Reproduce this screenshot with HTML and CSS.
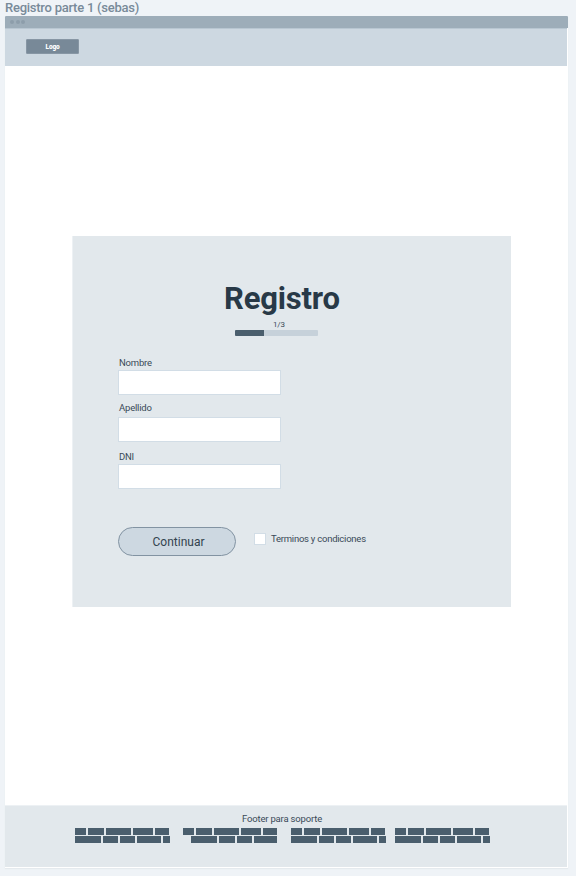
FILE: index.html
```html
<!DOCTYPE html>
<html lang="es">
<head>
<meta charset="utf-8">
<title>Registro</title>
<link rel="stylesheet" href="styles.css">
</head>
<body>
<div class="frame-title"><span>Registro parte 1 (sebas)</span></div>
<div class="window">
  <div class="titlebar"><i></i><i></i><i></i></div>
  <header class="header"><div class="logo"><span>Logo</span></div></header>
  <main class="main">
    <form class="card">
      <h1><span>Registro</span></h1>
      <div class="step"><span>1/3</span></div>
      <div class="progress"><div class="progress-fill"></div></div>
      <label class="field nombre"><span>Nombre</span><input type="text"></label>
      <label class="field apellido"><span>Apellido</span><input type="text"></label>
      <label class="field dni"><span>DNI</span><input type="text"></label>
      <div class="actions">
        <button type="button"><span>Continuar</span></button>
        <label class="terms"><i class="checkbox"></i><span>Terminos y condiciones</span></label>
      </div>
    </form>
  </main>
  <footer class="footer">
    <div class="footer-title"><span>Footer para soporte</span></div>
    <div class="columns">
      <div class="column">
        <div class="line top"><i></i><i></i><i></i><i></i><i></i></div>
        <div class="line bottom"><i></i><i></i><i></i><i></i><i></i></div>
      </div>
      <div class="column">
        <div class="line top"><i></i><i></i><i></i><i></i><i></i></div>
        <div class="line bottom indented"><i></i><i></i><i></i><i></i></div>
      </div>
      <div class="column">
        <div class="line top"><i></i><i></i><i></i><i></i><i></i></div>
        <div class="line bottom"><i></i><i></i><i></i><i></i><i></i></div>
      </div>
      <div class="column">
        <div class="line top"><i></i><i></i><i></i><i></i><i></i></div>
        <div class="line bottom"><i></i><i></i><i></i><i></i><i></i></div>
      </div>
    </div>
  </footer>
</div>
</body>
</html>
```
FILE: styles.css
```css
* { box-sizing: border-box; }
body {
  margin: 0;
  height: 876px;
  overflow: hidden;
  background: #eff3f7;
  color: #3a4a58;
  font-family: Roboto, "Liberation Sans", sans-serif;
}
.frame-title {
  height: 16px;
  padding-left: 5px;
  font-size: 13px;
  font-weight: 500;
  line-height: 15px;
  letter-spacing: -0.25px;
  color: #788a99;
  white-space: nowrap;
}
.window {
  display: flex;
  flex-direction: column;
  width: 563px;
  height: 852px;
  margin-left: 5px;
  background: #fff;
  box-shadow: 0 1px 1px #e5eaee;
}
.titlebar {
  display: flex;
  gap: 1.5px;
  height: 12px;
  padding: 4px 0 0 5px;
  border-radius: 1px 1px 0 0;
  background: #9dadb9;
}
.titlebar i {
  width: 4px;
  height: 4px;
  border-radius: 50%;
  background: #8d9dab;
}
.header {
  width: 562px;
  height: 38px;
  padding: 10px 0 0 21px;
  border-top: 1px solid #b9c7d2;
  background: #cdd8e1;
}
.logo {
  width: 53px;
  height: 15px;
  border: 1px solid #8796a4;
  border-radius: 1px;
  background: #788998;
  color: #fff;
  font-size: 6.5px;
  font-weight: 900;
  line-height: 14px;
  letter-spacing: -0.2px;
  text-align: center;
}
.main {
  height: 739px;
  padding: 170px 0 0 67px;
}
.card {
  width: 439px;
  height: 371px;
  padding: 44px 0 0 46px;
  border-left: 1px solid #edf1f4;
  padding-left: 45px;
  background: #e2e8ec;
}
h1 {
  margin: 0 0 0 106px;
  height: 40px;
  font-size: 31px;
  line-height: 37px;
  font-weight: 700;
  letter-spacing: -0.2px;
  color: #283947;
}
.step {
  height: 10px;
  margin-left: 155px;
  font-size: 8px;
  line-height: 10px;
  letter-spacing: -0.2px;
}
.progress {
  width: 83px;
  height: 6px;
  margin: 0 0 0 117px;
  border-radius: 1px;
  background: #c6d1da;
  overflow: hidden;
}
.progress-fill { width: 29px; height: 6px; background: #4a5e6d; }
.field {
  display: block;
  width: 163px;
  font-size: 9.5px;
  letter-spacing: -0.2px;
}
.field span {
  display: block;
  width: max-content;
  height: 14px;
  margin-left: 1px;
  line-height: 14px;
}
.field input {
  display: block;
  width: 163px;
  height: 25px;
  margin: 0;
  padding: 0 5px;
  border: 1px solid #d2dde6;
  border-radius: 0;
  outline: 0;
  background: #fff;
}
.nombre { padding-top: 20px; }
.apellido { padding-top: 6px; }
.apellido input { margin-top: 2px; }
.dni { padding-top: 8px; }
.actions { display: flex; margin-top: 38px; }
button {
  width: 118px;
  height: 29px;
  padding: 0 0 0 3px;
  border: 1px solid #8293a2;
  border-radius: 15px;
  background: #cdd8e1;
  color: #33434f;
  font-family: inherit;
  font-size: 12px;
}
.terms {
  display: flex;
  gap: 5px;
  height: 12px;
  margin: 6px 0 0 18px;
  font-size: 9.5px;
  line-height: 11px;
  letter-spacing: -0.24px;
  white-space: nowrap;
}
.checkbox {
  width: 12px;
  height: 12px;
  border: 1px solid #d2dde6;
  background: #fff;
}
.footer {
  width: 562px;
  height: 62px;
  padding-top: 5px;
  border-top: 1px solid #edf1f4;
  background: #e2e8ec;
}
.footer-title {
  height: 17px;
  margin-left: 237px;
  font-size: 9.5px;
  line-height: 15px;
  letter-spacing: -0.18px;
}
.columns {
  display: grid;
  grid-template-columns: 108px 108px 104px 96px;
  margin-left: 69.5px;
}
.column { display: grid; gap: 1px; }
.line { display: grid; column-gap: 2px; height: 7px; }
.line i { background: #4a5e6d; }
.top { grid-template-columns: 11.5px 16px 25px 20px 14px; }
.bottom { grid-template-columns: 26.5px 15px 15px 24px 7px; }
.indented { padding-left: 8px; grid-template-columns: 26px 16px 15px 23.5px; }
```
